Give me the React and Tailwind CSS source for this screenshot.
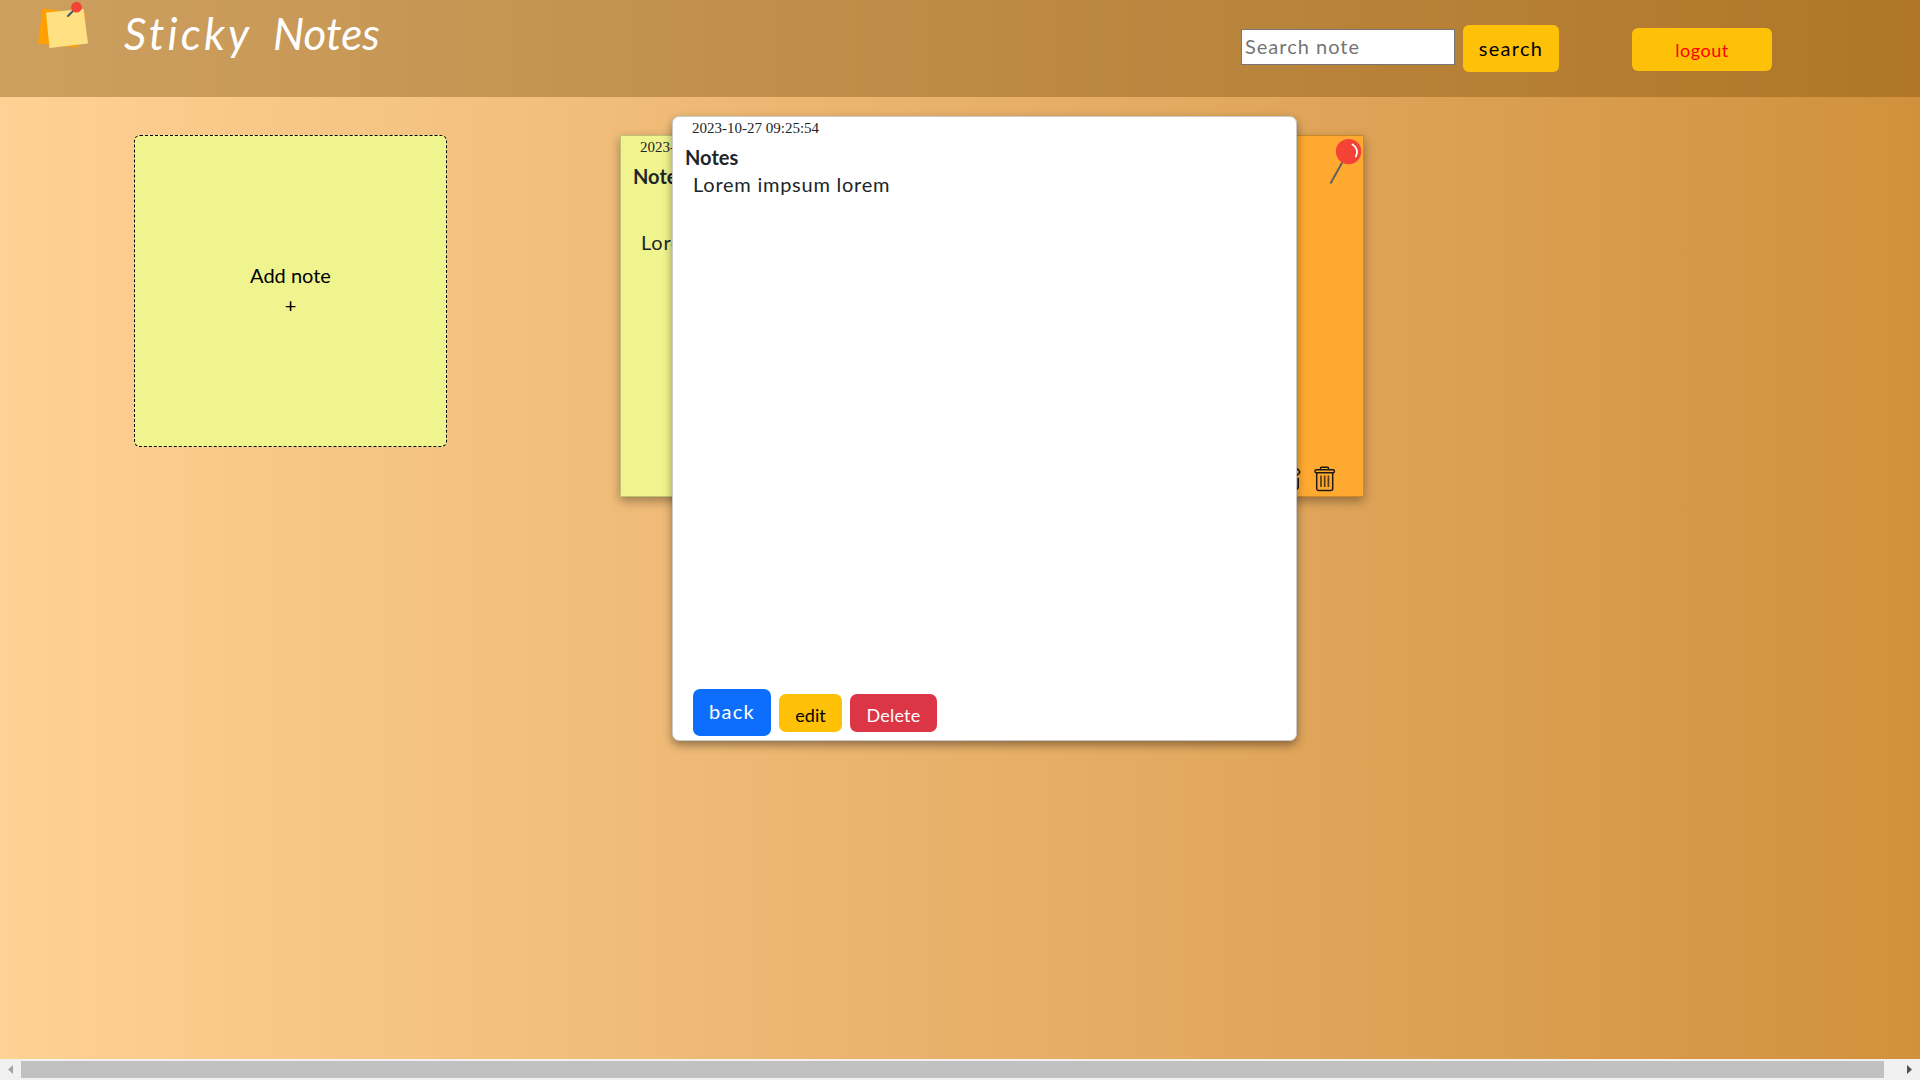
import React from 'react';

const hand = 'font-["Lato","Open_Sans",sans-serif] font-normal';

function Logo() {
  return (
    <svg className="block h-[50px] w-[52px] shrink-0" viewBox="38 0 52 50">
      <path d="M42.5 8.5 86 14 77 47.5 38 43.5Z" fill="#ffa000" />
      <path d="M46 12.5 83.5 9 88 43.5 49.5 48Z" fill="#ffe082" />
      <path d="M68 16 73 11" stroke="#455a64" strokeWidth="2" strokeLinecap="round" />
      <circle cx="76.5" cy="7.2" r="5.4" fill="#f44336" />
    </svg>
  );
}

function Pin() {
  return (
    <svg className="block h-[50px] w-[34px]" viewBox="1329 138 34 50">
      <path d="M1330.5 183.5 1343 161" stroke="#616161" strokeWidth="2" />
      <circle cx="1348.6" cy="151.6" r="12.7" fill="#f44336" />
      <path d="M1352.5 144.5a8.5 8.5 0 0 1 3.3 12" fill="none" stroke="#fff" strokeWidth="1.8" strokeLinecap="round" />
    </svg>
  );
}

function EditIcon() {
  return (
    <svg className="block h-[26px] w-[26px]" viewBox="0 0 26 26" fill="none" stroke="#211b12" strokeWidth="1.6">
      <path d="M23.2 12V20.5a3 3 0 0 1-3 3H4a3 3 0 0 1-3-3V8a3 3 0 0 1 3-3h10M8 17l1-5L20 3.5a2 2 0 0 1 3 0l1 1a2 2 0 0 1 0 3L13 17Z" />
    </svg>
  );
}

function TrashIcon() {
  return (
    <svg className="block h-[26px] w-[22px]" viewBox="0 0 22 26" fill="none" stroke="#1f1a12" strokeWidth="1.5">
      <path d="M6.5 3.8V2.200a1 1 0 0 1 1-1h6a1 1 0 0 1 1 1v1.6" />
      <rect x="1" y="3.8" width="19.4" height="2.9" rx="1.3" />
      <path d="M2.7 6.8V22.5a2 2 0 0 0 2 2h12a2 2 0 0 0 2-2V6.8" />
      <path d="M7 9.5V21M10.7 9.5V21M14.4 9.5V21" strokeWidth="1.7" opacity=".75" />
    </svg>
  );
}

export default function App() {
  return (
    <div className={`relative flex h-[1080px] w-[1920px] flex-col overflow-hidden bg-linear-to-r from-[#ffd194] to-[#d1913c] text-[#212529] ${hand}`}>
      <header className="flex h-[97px] shrink-0 items-start bg-[#704600]/35 pl-[38px]">
        <Logo />
        <h1 className="ml-[34px] mt-[5px] flex w-[1117px] shrink-0 text-[44px] font-normal italic leading-[56px] text-white">
          <span className="w-[149px] tracking-[3.2px]">Sticky</span>{' '}
          <span>Notes</span>
        </h1>
        <input className="mt-[29px] h-[36px] w-[214px] shrink-0 border border-[#767676] bg-white px-[3px] pb-[2px] text-[20px] tracking-[1px] outline-none placeholder:text-[#757575] placeholder:opacity-100" placeholder="Search note" />
        <button className="ml-[8px] mt-[25px] h-[47px] w-[96px] shrink-0 rounded-[6px] bg-[#ffc107] pb-[2px] text-[20px] tracking-[1.3px] text-black">search</button>
        <button className="ml-[73px] mt-[28px] h-[43px] w-[140px] shrink-0 rounded-[6px] bg-[#ffc107] pt-[2px] text-[18px] tracking-[0.5px] text-[#ff0000]">logout</button>
      </header>

      <main className="flex min-h-0 flex-1 items-start pl-[134px] pt-[38px]">
        <button className="flex h-[312px] w-[313px] flex-col items-center justify-center rounded-[6px] border border-dashed border-black bg-[#f0f48f] pb-[2px] text-[20px] leading-[30px] text-black">
          <span>Add note</span>
          <span>+</span>
        </button>
        <article className="ml-[173px] h-[362px] w-[362px] border border-black/20 bg-[#f0f48f] shadow-[0_4px_10px_rgba(0,0,0,0.35)]">
          <time className='ml-[19px] mt-px block font-["Liberation_Serif",serif] text-[15px] leading-[20px]'>2023-10-27 09:25:54</time>
          <h2 className="ml-[12px] mt-[5px] text-[20px] font-bold leading-[28px]">Notes</h2>
          <p className="ml-[20px] mt-[38px] text-[20px] leading-[28px] tracking-[0.75px]">Lorem impsum lorem</p>
        </article>
        <article className="ml-[20px] flex h-[362px] w-[362px] flex-col items-end justify-between border border-black/20 bg-[#ffa930] pb-[4px] pt-[2px] shadow-[0_4px_10px_rgba(0,0,0,0.35)]">
          <Pin />
          <div className="mr-[27px] flex gap-[13px]">
            <EditIcon />
            <TrashIcon />
          </div>
        </article>
      </main>

      <section className="absolute left-[672px] top-[116px] flex h-[625px] w-[625px] flex-col rounded-[7px] border border-[#c9c9c9] bg-white shadow-[0_4px_10px_rgba(0,0,0,0.4)]">
        <time className='ml-[19px] mt-px block font-["Liberation_Serif",serif] text-[15px] leading-[20px]'>2023-10-27 09:25:54</time>
        <h2 className="ml-[12px] mt-[5px] text-[20px] font-bold leading-[28px]">Notes</h2>
        <p className="ml-[20px] text-[20px] leading-[26px] tracking-[0.75px]">Lorem impsum lorem</p>
        <div className="mb-[4px] ml-[20px] mt-auto flex items-center gap-[8px]">
          <button className="h-[47px] w-[78px] rounded-[7px] bg-[#0d6efd] pb-[3px] text-[20px] tracking-[1.3px] text-white">back</button>
          <button className="h-[38px] w-[63px] rounded-[7px] bg-[#ffc107] pt-[6px] text-[18px] text-black">edit</button>
          <button className="h-[38px] w-[87px] rounded-[7px] bg-[#dc3545] pt-[6px] text-[18px] tracking-[0.2px] text-white">Delete</button>
        </div>
      </section>

      <footer className="flex h-[21px] shrink-0 items-center bg-[#f1f1f1]">
        <svg className="h-[9px] w-[21px]" viewBox="0 0 21 9"><path d="M13 0v9L8 4.5Z" fill="#a3a3a3" /></svg>
        <div className="h-[17px] w-[1863px] bg-[#c1c1c1]" />
        <svg className="ml-[15px] h-[9px] w-[21px]" viewBox="0 0 21 9"><path d="M8 0v9l5-4.5Z" fill="#505050" /></svg>
      </footer>
    </div>
  );
}
